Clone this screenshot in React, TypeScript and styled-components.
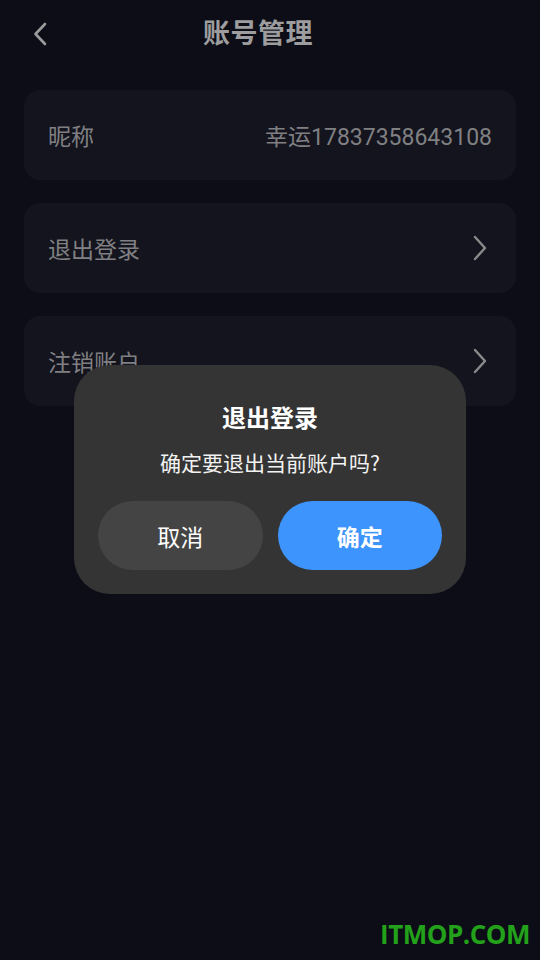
import React from "react";
import styled, { createGlobalStyle } from "styled-components";

const Global = createGlobalStyle`
  html, body { margin: 0; padding: 0; background: #0c0d16; }
  body { font-family: "Noto Sans CJK SC", "Noto Sans", Roboto, sans-serif; }
  * { box-sizing: border-box; }
`;

const Page = styled.div`
  position: relative;
  width: 540px;
  height: 960px;
  background: #0c0d16;
  overflow: hidden;
`;

const Header = styled.div`
  position: relative;
  height: 68px;
  display: flex;
  align-items: center;
  justify-content: center;
  padding-bottom: 6px;
  padding-right: 24px;
`;

const BackButton = styled.div`
  position: absolute;
  left: 28px;
  top: 21px;
  width: 24px;
  height: 26px;
  display: flex;
  align-items: center;
  justify-content: center;
`;

const Title = styled.div`
  font-size: 27px;
  font-weight: 700;
  color: #9d9d9f;
  letter-spacing: 0.5px;
`;

const List = styled.div`
  display: flex;
  flex-direction: column;
  gap: 23px;
  padding: 22px 24px 0;
`;

const Card = styled.div`
  height: 90px;
  border-radius: 16px;
  background: #13141d;
  display: flex;
  align-items: center;
  justify-content: space-between;
  padding: 0 28px 0 24px;
`;

const Label = styled.div`
  font-size: 23px;
  color: #808083;
`;

const Value = styled.div`
  font-size: 23px;
  margin-right: -4px;
  color: #808083;
  font-family: Roboto, "Noto Sans CJK SC", sans-serif;
`;

const Overlay = styled.div`
  position: absolute;
  left: 74px;
  top: 365px;
  width: 392px;
  height: 229px;
  border-radius: 36px;
  background: #343434;
  display: flex;
  flex-direction: column;
  align-items: center;
  padding: 34px 24px 0;
`;

const DialogTitle = styled.div`
  font-size: 24px;
  font-weight: 700;
  color: #ffffff;
  line-height: 36px;
`;

const DialogText = styled.div`
  margin-top: 12px;
  font-size: 21px;
  color: #f2f2f2;
  line-height: 30px;
`;

const Buttons = styled.div`
  margin-top: 24px;
  width: 100%;
  display: grid;
  grid-template-columns: 1fr 1fr;
  gap: 15px;
`;

const Btn = styled.div<{ $primary?: boolean }>`
  height: 69px;
  border-radius: 35px;
  display: flex;
  align-items: center;
  justify-content: center;
  font-size: 23px;
  color: #ffffff;
  font-weight: ${(p) => (p.$primary ? 700 : 400)};
  background: ${(p) => (p.$primary ? "#3d94fc" : "#444444")};
`;

const Watermark = styled.div`
  position: absolute;
  right: 10px;
  bottom: 8px;
  font-family: "Open Sans", "Liberation Sans", sans-serif;
  font-weight: 700;
  font-size: 26px;
  color: #23a11b;
  letter-spacing: -0.5px;
`;

const Chevron = ({ dir }: { dir: "left" | "right" }) => (
  <svg width="16" height="26" viewBox="0 0 16 26" fill="none">
    {dir === "right" ? (
      <path d="M3 2 L13 13 L3 24" stroke="#8a8a8d" strokeWidth="2.4" strokeLinecap="round" strokeLinejoin="round" />
    ) : (
      <path d="M13 3 L3.5 13 L13 23" stroke="#9b9b9d" strokeWidth="2.6" strokeLinecap="round" strokeLinejoin="round" />
    )}
  </svg>
);

export default function App() {
  return (
    <Page>
      <Global />
      <Header>
        <BackButton>
          <Chevron dir="left" />
        </BackButton>
        <Title>账号管理</Title>
      </Header>
      <List>
        <Card>
          <Label>昵称</Label>
          <Value>幸运17837358643108</Value>
        </Card>
        <Card>
          <Label>退出登录</Label>
          <Chevron dir="right" />
        </Card>
        <Card>
          <Label>注销账户</Label>
          <Chevron dir="right" />
        </Card>
      </List>
      <Overlay>
        <DialogTitle>退出登录</DialogTitle>
        <DialogText>确定要退出当前账户吗?</DialogText>
        <Buttons>
          <Btn>取消</Btn>
          <Btn $primary>确定</Btn>
        </Buttons>
      </Overlay>
      <Watermark>ITMOP.COM</Watermark>
    </Page>
  );
}
